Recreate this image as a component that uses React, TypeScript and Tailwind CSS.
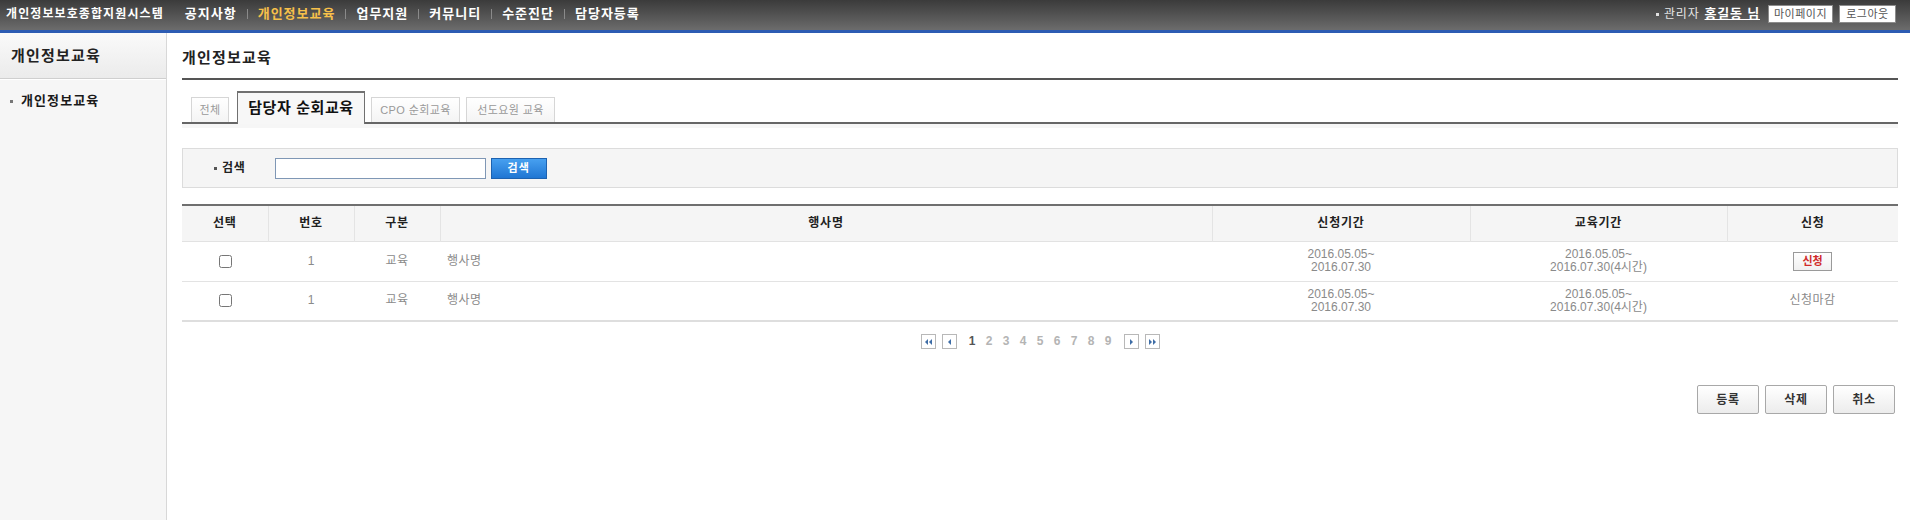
import React from "react";

const FONT = "font-['Liberation_Sans','Noto_Sans_CJK_KR',sans-serif]";

function PageBtn({ kind }: { kind: "first" | "prev" | "next" | "last" }) {
  const tri = (dir: "l" | "r", x: number) =>
    dir === "l" ? (
      <polygon points={`${x + 3},1 ${x},4 ${x + 3},7`} fill="#3e6da6" />
    ) : (
      <polygon points={`${x},1 ${x + 3},4 ${x},7`} fill="#3e6da6" />
    );
  return (
    <span className="w-[15px] h-[15px] border border-[#b8b8b8] bg-white flex items-center justify-center">
      <svg width="9" height="8" viewBox="0 0 9 8">
        {kind === "first" && (
          <>
            {tri("l", 1)}
            {tri("l", 5)}
          </>
        )}
        {kind === "prev" && tri("l", 3)}
        {kind === "next" && tri("r", 3)}
        {kind === "last" && (
          <>
            {tri("r", 1)}
            {tri("r", 5)}
          </>
        )}
      </svg>
    </span>
  );
}

const menu = ["공지사항", "개인정보교육", "업무지원", "커뮤니티", "수준진단", "담당자등록"];

export default function App() {
  const rows = [{ apply: true }, { apply: false }];
  return (
    <div className={`w-[1910px] h-[520px] bg-white flex flex-col overflow-hidden ${FONT}`}>
      {/* Top header */}
      <div className="h-[33px] shrink-0 bg-gradient-to-b from-[#3b3b3b] to-[#6c6c6c] border-b-[3px] border-[#2d5cb3] flex items-center pb-[2px] pl-[6px] pr-[14px]">
        <span className="text-[12px] leading-[16px] font-bold text-white tracking-[1.1px]">개인정보보호종합지원시스템</span>
        <div className="flex items-center ml-[21px]">
          {menu.map((m, i) => (
            <React.Fragment key={m}>
              {i > 0 && <span className="w-px h-[10px] bg-[#8a8a8a] mx-[10px]" />}
              <span
                className={`text-[13px] leading-[16px] font-bold tracking-[1px] ${
                  i === 1 ? "text-[#f7c04a]" : "text-white"
                }`}
              >
                {m}
              </span>
            </React.Fragment>
          ))}
        </div>
        <div className="ml-auto flex items-center">
          <span className="w-[3px] h-[3px] bg-[#e0e0e0] mr-[5px]" />
          <span className="text-[12px] leading-[16px] text-[#e6e6e6] tracking-[0.8px]">관리자</span>
          <span className="text-[13px] leading-[16px] font-bold text-white underline ml-[5px] tracking-[0.8px]">홍길동 님</span>
          <span className="ml-[8px] h-[18px] w-[65px] bg-white border border-[#8c8c8c] text-[11px] leading-[16px] text-[#555] flex items-center justify-center tracking-[0.5px]">
            마이페이지
          </span>
          <span className="ml-[6px] h-[18px] w-[57px] bg-white border border-[#8c8c8c] text-[11px] leading-[16px] text-[#555] flex items-center justify-center tracking-[0.5px]">
            로그아웃
          </span>
        </div>
      </div>

      <div className="flex flex-1 min-h-0">
        {/* Sidebar */}
        <div className="w-[167px] shrink-0 bg-[#f6f6f6] border-r border-[#d8d8d8] flex flex-col">
          <div className="h-[46px] bg-gradient-to-b from-[#fafafa] to-[#ebebeb] border-b border-[#cfcfcf] flex items-center pl-[11px]">
            <span className="text-[15px] leading-[18px] font-bold text-[#222] tracking-[1.2px]">개인정보교육</span>
          </div>
          <div className="h-px bg-white" />
          <div className="flex items-center pl-[10px] mt-[13px]">
            <span className="w-[3px] h-[3px] bg-[#777] mr-[8px]" />
            <span className="text-[13px] leading-[16px] font-bold text-[#1a1a1a] tracking-[1.1px]">개인정보교육</span>
          </div>
        </div>

        {/* Main */}
        <div className="flex-1 pl-[15px] pr-[12px] flex flex-col">
          <div className="pt-[16px] pb-[11px] border-b-2 border-[#555]">
            <span className="block text-[15px] leading-[18px] font-bold text-[#222] tracking-[1.2px]">개인정보교육</span>
          </div>

          {/* Tabs */}
          <div className="mt-[11px] flex items-end pl-[9px] border-b-2 border-[#666] h-[33px]">
            <div className="h-[25px] w-[38px] border border-b-0 border-[#d6d6d6] bg-gradient-to-b from-white to-[#f4f4f4] flex items-center justify-center text-[11px] leading-[14px] text-[#999] tracking-[0.5px]">
              전체
            </div>
            <div className="ml-[8px] h-[33px] w-[128px] -mb-[2px] border-t-2 border-x border-[#707070] border-b-0 bg-[#f7f7f7] flex items-center justify-center pb-[2px] text-[15px] leading-[18px] font-bold text-[#111] tracking-[0.6px]">
              담당자 순회교육
            </div>
            <div className="ml-[6px] h-[25px] w-[89px] border border-b-0 border-[#d6d6d6] bg-gradient-to-b from-white to-[#f4f4f4] flex items-center justify-center text-[11px] leading-[14px] text-[#999] tracking-[0.4px]">
              CPO 순회교육
            </div>
            <div className="ml-[6px] h-[25px] w-[89px] border border-b-0 border-[#d6d6d6] bg-gradient-to-b from-white to-[#f4f4f4] flex items-center justify-center text-[11px] leading-[14px] text-[#999] tracking-[0.4px]">
              선도요원 교육
            </div>
          </div>
          <div className="h-[4px] bg-[#f6f6f6]" />

          {/* Search */}
          <div className="mt-[20px] h-[40px] border border-[#dcdcdc] bg-[#f5f5f5] flex items-center pl-[31px]">
            <span className="w-[3px] h-[3px] bg-[#555] mr-[5px]" />
            <span className="text-[12px] leading-[16px] font-bold text-[#222] tracking-[0.8px]">검색</span>
            <input
              type="text"
              className="ml-[29px] w-[211px] h-[21px] border border-[#7f97b5] bg-white outline-none"
            />
            <button className="ml-[5px] w-[56px] h-[21px] border border-[#1d62b0] bg-gradient-to-b from-[#47a0f0] to-[#1f76d3] text-white text-[11px] leading-[14px] font-bold tracking-[1px] flex items-center justify-center">
              검색
            </button>
          </div>

          {/* Table */}
          <table className="mt-[16px] w-full table-fixed border-collapse border-t-2 border-t-[#6f6f6f]">
            <colgroup>
              <col className="w-[86px]" />
              <col className="w-[86px]" />
              <col className="w-[86px]" />
              <col />
              <col className="w-[258px]" />
              <col className="w-[257px]" />
              <col className="w-[171px]" />
            </colgroup>
            <thead>
              <tr className="h-[36px] bg-[#f5f5f5] border-b border-[#e2e2e2]">
                {["선택", "번호", "구분", "행사명", "신청기간", "교육기간", "신청"].map((h, i) => (
                  <th
                    key={h}
                    className={`p-0 text-[12px] leading-[16px] font-bold text-[#222] text-center tracking-[0.8px] ${
                      i < 6 ? "border-r border-[#e4e4e4]" : ""
                    }`}
                  >
                    {h}
                  </th>
                ))}
              </tr>
            </thead>
            <tbody>
              {rows.map((r, idx) => (
                <tr
                  key={idx}
                  className={`h-[40px] ${
                    idx === rows.length - 1 ? "border-b-2 border-[#dedede]" : "border-b border-[#e3e3e3]"
                  } text-[12px] leading-[13px] text-[#8a8a8a]`}
                >
                  <td className="p-0 text-center">
                    <input type="checkbox" className="w-[13px] h-[13px] align-middle" />
                  </td>
                  <td className="p-0 text-center">1</td>
                  <td className="p-0 text-center tracking-[0.5px]">교육</td>
                  <td className="p-0 pl-[7px] text-left tracking-[0.5px]">행사명</td>
                  <td className="p-0 text-center">
                    2016.05.05~
                    <br />
                    2016.07.30
                  </td>
                  <td className="p-0 text-center">
                    2016.05.05~
                    <br />
                    2016.07.30(4시간)
                  </td>
                  <td className="p-0 text-center">
                    {r.apply ? (
                      <span className="inline-flex items-center justify-center w-[39px] h-[19px] border border-[#9a9a9a] bg-gradient-to-b from-white to-[#f0f0f0] text-[11px] leading-[14px] font-bold text-[#d02a2a]">
                        신청
                      </span>
                    ) : (
                      <span className="text-[12px] text-[#8a8a8a] tracking-[0.5px]">신청마감</span>
                    )}
                  </td>
                </tr>
              ))}
            </tbody>
          </table>

          {/* Pagination */}
          <div className="mt-[12px] flex items-center justify-center">
            <PageBtn kind="first" />
            <span className="w-[6px]" />
            <PageBtn kind="prev" />
            <div className="flex items-center mx-[7px]">
              {[1, 2, 3, 4, 5, 6, 7, 8, 9].map((n) => (
                <span
                  key={n}
                  className={`w-[17px] text-center text-[12px] leading-[15px] font-bold ${
                    n === 1 ? "text-[#555]" : "text-[#b4b4b4]"
                  }`}
                >
                  {n}
                </span>
              ))}
            </div>
            <PageBtn kind="next" />
            <span className="w-[6px]" />
            <PageBtn kind="last" />
          </div>

          {/* Bottom buttons */}
          <div className="mt-[36px] flex justify-end gap-[6px] pr-[3px]">
            {["등록", "삭제", "취소"].map((b) => (
              <button
                key={b}
                className="w-[62px] h-[29px] border border-[#a8a8a8] rounded-[2px] bg-gradient-to-b from-white to-[#ececec] text-[12px] leading-[16px] font-bold text-[#333] flex items-center justify-center tracking-[0.8px]"
              >
                {b}
              </button>
            ))}
          </div>
        </div>
      </div>
    </div>
  );
}
